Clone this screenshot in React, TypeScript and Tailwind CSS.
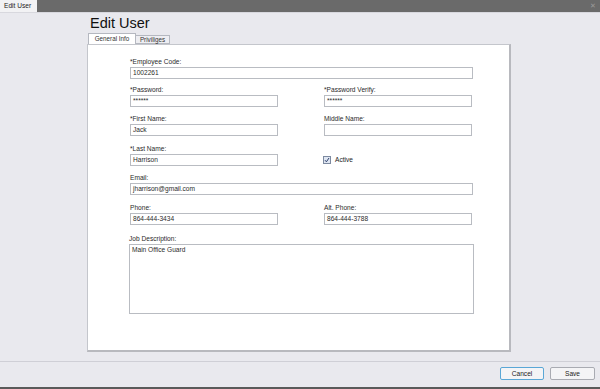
import React from "react";

const font = { fontFamily: '"Liberation Sans", Arial, sans-serif' };

function Label({ children }: { children: React.ReactNode }) {
  return <div className="h-[8px] text-[6.6px] leading-[8px] text-[#2a2a2a]">{children}</div>;
}

function Input({ value, w, h = "h-[12px]" }: { value?: string; w: string; h?: string }) {
  return (
    <div className={`${w} ${h} mt-[1px] border border-[#b9bcc2] bg-white px-[2px] text-[6.6px] leading-[10px] text-[#2a2a2a]`}>
      {value}
    </div>
  );
}

function Field({ label, value, w = "w-[148px]" }: { label: string; value?: string; w?: string }) {
  return (
    <div className="flex flex-col">
      <Label>{label}</Label>
      <Input value={value} w={w} />
    </div>
  );
}

export default function App() {
  return (
    <div className="w-[600px] h-[389px] bg-[#e9e9ee] flex flex-col overflow-hidden" style={font}>
      {/* top bar */}
      <div className="h-[13px] bg-[#6a6a6a] flex items-stretch justify-between border-b border-[#d8d8de]">
        <div className="w-[37px] bg-[#f2f2f4] text-[6.6px] leading-[12px] pl-[4px] text-[#222]">Edit User</div>
        <div className="text-[7px] leading-[12px] pr-[4px] text-[#9a9a9a]">✕</div>
      </div>

      <div className="flex-1 flex flex-col pl-[87px]">
        <div className="h-[20px] pl-[3px] text-[14.5px] leading-[20px] text-[#111]">Edit User</div>
        {/* tabs */}
        <div className="h-[11px] mt-[0px] flex items-end pl-[1px]">
          <div className="h-[11px] w-[48px] bg-white border border-b-0 border-[#b5b8c0] text-[6.3px] leading-[10px] text-center text-[#333]">
            General Info
          </div>
          <div className="h-[9px] w-[34px] bg-[#eeeef2] border border-l-0 border-[#b5b8c0] text-[6.3px] leading-[8px] text-center text-[#333]">
            Priviliges
          </div>
        </div>
        {/* panel */}
        <div className="w-[424px] h-[308px] bg-white border border-[#c4c6cc] border-r-[2px] border-r-[#b8b9be] border-b-[2px] border-b-[#b8b9be] pl-[42px] pt-[13px]">
          <Field label="*Employee Code:" value="1002261" w="w-[343px]" />
          <div className="mt-[7px] flex gap-[46px]">
            <Field label="*Password:" value="******" />
            <Field label="*Password Verify:" value="******" />
          </div>
          <div className="mt-[8px] flex gap-[46px]">
            <Field label="*First Name:" value="Jack" />
            <Field label="Middle Name:" value="" />
          </div>
          <div className="mt-[9px] flex gap-[46px]">
            <Field label="*Last Name:" value="Harrison" />
            <div className="pt-[9px] -ml-[1px] flex items-center gap-[4px]">
              <div className="w-[8px] h-[8px] border border-[#7d8aa0] bg-[#dfe6f2] flex items-center justify-center">
                <svg width="6" height="6" viewBox="0 0 6 6">
                  <path d="M1 3.2 L2.4 4.8 L5 1" fill="none" stroke="#2c3f6b" strokeWidth="1" />
                </svg>
              </div>
              <span className="text-[6.6px] leading-[8px] text-[#222]">Active</span>
            </div>
          </div>
          <div className="mt-[8px]">
            <Field label="Email:" value="jharrison@gmail.com" w="w-[343px]" />
          </div>
          <div className="mt-[9px] flex gap-[46px]">
            <Field label="Phone:" value="864-444-3434" />
            <Field label="Alt. Phone:" value="864-444-3788" />
          </div>
          <div className="mt-[10px] -ml-[1px] flex flex-col">
            <Label>Job Description:</Label>
            <Input value="Main Office Guard" w="w-[345px]" h="h-[70px]" />
          </div>
        </div>
      </div>

      {/* footer */}
      <div className="h-[26px] border-t border-[#cfcfd6] flex items-start justify-end gap-[6px] pr-[5px] pt-[5px]">
        <div className="w-[44px] h-[13px] rounded-[2px] border border-[#5aa7d6] bg-[#f4f4f6] text-[6.6px] leading-[11px] text-center text-[#222]">
          Cancel
        </div>
        <div className="w-[45px] h-[13px] rounded-[2px] border border-[#a9abb2] bg-[#f4f4f6] text-[6.6px] leading-[11px] text-center text-[#222]">
          Save
        </div>
      </div>
      <div className="h-[2px] bg-[#5a5a5a]" />
    </div>
  );
}
